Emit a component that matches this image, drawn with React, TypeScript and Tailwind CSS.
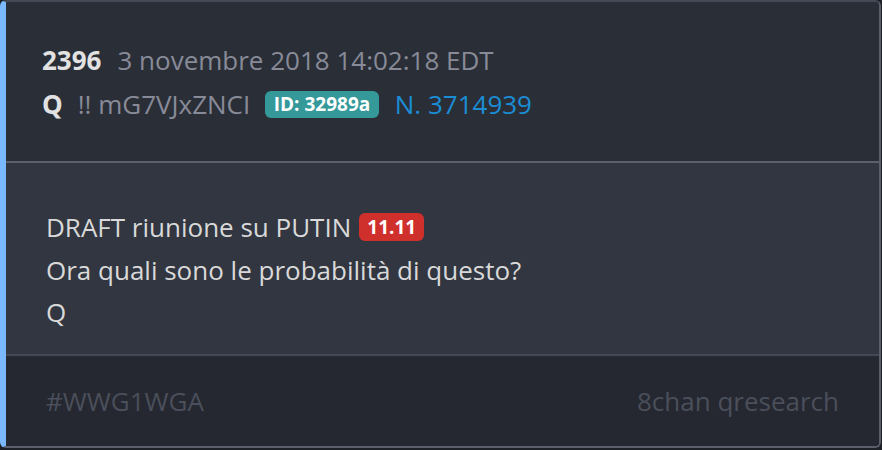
import React from "react";

export default function App() {
  return (
    <div
      className="w-[882px] h-[450px] bg-[#1e2128]"
      style={{ fontFamily: '"Open Sans", "Noto Sans", sans-serif' }}
    >
      <div className="w-[881px] h-[448px] flex flex-col overflow-hidden rounded-[6px] border-t-2 border-r-2 border-b-2 border-l-[6px] border-t-[#444955] border-r-[#5a5f6b] border-b-[#5a5f6b] border-l-[#7ab8ff]">
        <div className="h-[159px] bg-[#2a2e37] pl-[36px] pt-[36px] text-[26px] leading-[44px]">
          <div className="flex items-baseline">
            <span className="font-bold text-[#e2e2e2]">2396</span>
            <span className="ml-[16px] text-[#888b97]">3 novembre 2018 14:02:18 EDT</span>
          </div>
          <div className="flex items-center">
            <span className="font-bold text-[#e2e2e2]">Q</span>
            <span className="ml-[15px] text-[#888b97]">!! mG7VJxZNCI</span>
            <span className="ml-[15px] rounded-[6px] bg-[#35999a] px-[8.5px] text-[19px] leading-[27px] font-bold text-white">
              ID: 32989a
            </span>
            <span className="ml-[16px] text-[#1b8dd5]">N. 3714939</span>
          </div>
        </div>
        <div className="h-[2px] bg-[#5b606b]" />
        <div className="h-[191px] bg-[#313640] pl-[40px] pt-[43px] text-[26px] leading-[42.5px] text-[#d9d9d9]">
          <div className="flex items-center">
            <span>DRAFT riunione su PUTIN</span>
            <span className="ml-[8px] rounded-[6px] bg-[#d0302c] px-[8px] text-[19px] leading-[28px] font-bold text-white">
              11.11
            </span>
          </div>
          <div>Ora quali sono le probabilità di questo?</div>
          <div>Q</div>
        </div>
        <div className="h-[2px] bg-[#434854]" />
        <div className="flex-1 bg-[#252830] flex items-center justify-between pl-[40px] pr-[40px] text-[26px] text-[#4a4f5b]">
          <span>#WWG1WGA</span>
          <span>8chan qresearch</span>
        </div>
      </div>
    </div>
  );
}
